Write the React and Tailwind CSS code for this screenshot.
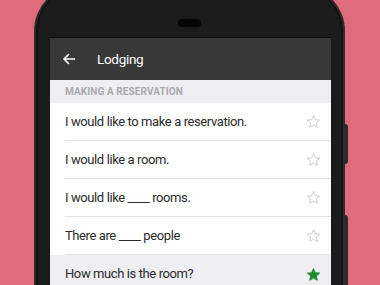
import React from 'react';

const rows = [
  { text: 'I would like to make a reservation.', starred: false },
  { text: 'I would like a room.', starred: false },
  { text: 'I would like ____ rooms.', starred: false },
  { text: 'There are ____ people', starred: false },
  { text: 'How much is the room?', starred: true, active: true },
];

const Star = ({ filled }) => (
  <svg width="15" height="15" viewBox="0 0 24 24" className="shrink-0">
    <path
      d="M12 2.5l2.9 6.6 7.1.6-5.4 4.7 1.6 7-6.2-3.7-6.2 3.7 1.6-7L2 9.7l7.1-.6z"
      fill={filled ? '#1e8a2e' : 'none'}
      stroke={filled ? '#1e8a2e' : '#c4c4c4'}
      strokeWidth="1.3"
      strokeLinejoin="round"
    />
  </svg>
);

export default function App() {
  return (
    <div className="w-[380px] h-[285px] overflow-hidden bg-[#e06b7b]" style={{ fontFamily: 'Roboto, "Liberation Sans", sans-serif' }}>
      <div className="relative ml-[34px] mt-[-15px] w-[311px] h-[330px] rounded-t-[46px] bg-[#1b1b1b] border-x-2 border-t-2 border-[#2c2c2c] shadow-[inset_2px_0_0_#111,inset_-2px_0_0_#111]">
        {/* side buttons */}
        <div className="absolute right-[-5px] top-[137px] w-[3px] h-[40px] rounded-r bg-[#2a2a2a]" />
        <div className="absolute right-[-5px] top-[228px] w-[3px] h-[80px] rounded-r bg-[#2a2a2a]" />

        <div className="flex justify-center pt-[32px] h-[50px]">
          <div className="w-[23px] h-[8px] rounded-full bg-[#050505]" />
        </div>

        <div className="ml-[14px] w-[281px] bg-white border-t border-[#0e0e0e]">
          <div className="h-[42px] bg-[#383838] flex items-center px-[12px]">
            <svg width="14" height="14" viewBox="0 0 24 24" fill="none" stroke="white" strokeWidth="2.8" strokeLinecap="square">
              <path d="M21 12H4M11 4.5L3.5 12l7.5 7.5" />
            </svg>
            <span className="ml-[21px] text-white text-[13.5px] tracking-[-0.3px]">Lodging</span>
          </div>
          <div className="h-[23px] bg-[#eeeef3] flex items-center px-[15px] text-[10px] font-bold text-[#a9a9ae] tracking-[0.1px]">
            MAKING A RESERVATION
          </div>
          {rows.map((row, i) => (
            <div key={i} className={row.active ? 'bg-[#eeeef3]' : 'bg-white'}>
              <div className={`ml-[15px] h-[38px] flex items-center justify-between pr-[10px] ${i < rows.length - 1 ? 'border-b border-[#e3e3e3]' : ''}`}>
                <span className="text-[13px] tracking-[-0.4px] text-[#2b2b2b]">{row.text}</span>
                <Star filled={row.starred} />
              </div>
            </div>
          ))}
        </div>
      </div>
    </div>
  );
}
